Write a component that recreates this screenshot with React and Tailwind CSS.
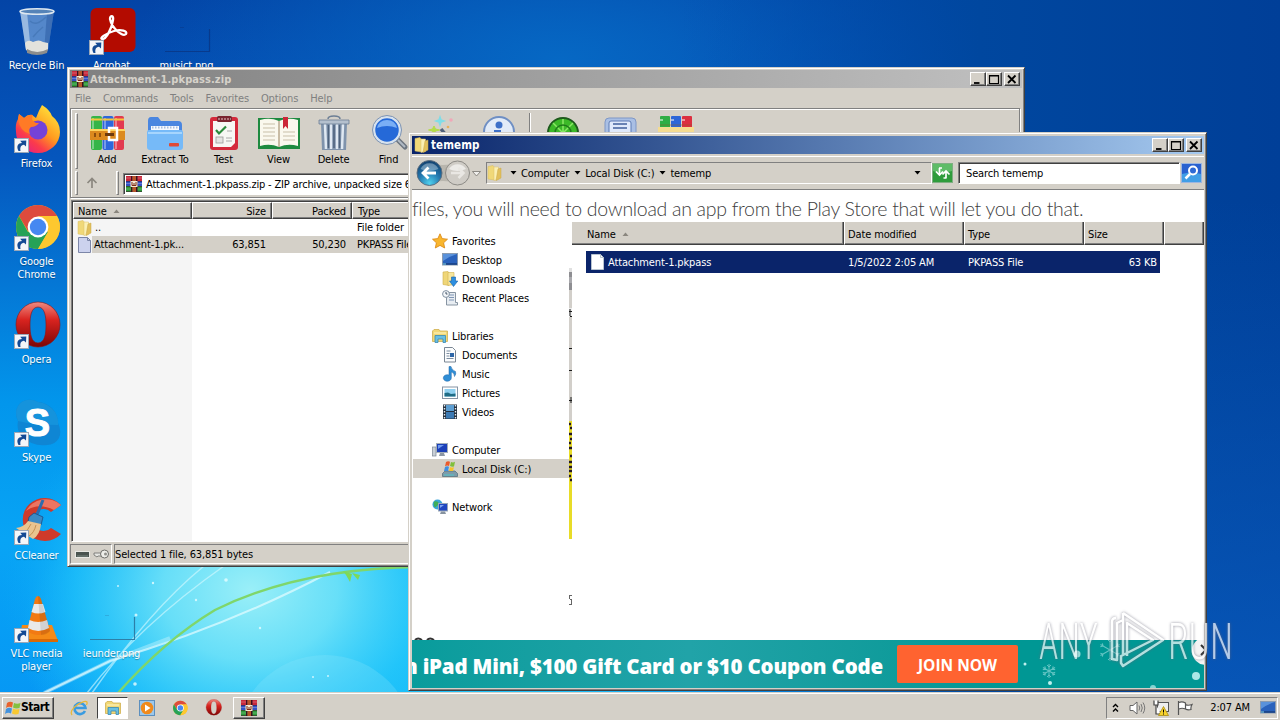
import clsx from "clsx";

const raised = "border border-t-white border-l-white border-r-[#404040] border-b-[#404040] shadow-[inset_-1px_-1px_0_#808080]";
const sunken = "border border-t-[#808080] border-l-[#808080] border-r-white border-b-white";

/* ---------- wallpaper ---------- */

const Wallpaper = () => (
    <svg className="absolute inset-0" width="1280" height="720" viewBox="0 0 1280 720">
        <defs>
            <linearGradient id="sky" x1="0" y1="0" x2="0" y2="1">
                <stop offset="0" stopColor="#0344a6" />
                <stop offset="0.22" stopColor="#0556bd" />
                <stop offset="0.4" stopColor="#0478d6" />
                <stop offset="0.56" stopColor="#0296ec" />
                <stop offset="0.75" stopColor="#08a4f5" />
                <stop offset="1" stopColor="#0696f4" />
            </linearGradient>
            <radialGradient id="glow" gradientUnits="userSpaceOnUse" cx="0" cy="0" r="1" gradientTransform="translate(250 590) scale(250 200)">
                <stop offset="0" stopColor="#9aeff8" />
                <stop offset="0.35" stopColor="#6fe2f8" stopOpacity="0.9" />
                <stop offset="0.7" stopColor="#22c4fa" stopOpacity="0.65" />
                <stop offset="1" stopColor="#08a8f6" stopOpacity="0" />
            </radialGradient>
            <radialGradient id="cyan" cx="0.5" cy="0.5" r="0.5">
                <stop offset="0" stopColor="#22c8fa" />
                <stop offset="0.6" stopColor="#22c8fa" stopOpacity="0.8" />
                <stop offset="1" stopColor="#22c8fa" stopOpacity="0" />
            </radialGradient>
            <radialGradient id="top" cx="0.5" cy="0.5" r="0.5">
                <stop offset="0" stopColor="#0668c4" />
                <stop offset="1" stopColor="#0668c4" stopOpacity="0" />
            </radialGradient>
            <linearGradient id="right" x1="0" y1="0" x2="1" y2="0">
                <stop offset="0" stopColor="#0050b0" stopOpacity="0" />
                <stop offset="0.5" stopColor="#00479f" />
                <stop offset="1" stopColor="#003f98" />
            </linearGradient>
            <linearGradient id="corner" x1="0" y1="0" x2="0" y2="1">
                <stop offset="0" stopColor="#0a5fc4" stopOpacity="0" />
                <stop offset="1" stopColor="#0a5fc4" stopOpacity="0.7" />
            </linearGradient>
        </defs>
        <rect width="1280" height="720" fill="url(#sky)" />
        <ellipse cx="560" cy="60" rx="430" ry="190" fill="url(#top)" />
        <rect x="680" width="600" height="720" fill="url(#right)" />
        <rect x="1180" y="200" width="100" height="500" fill="url(#corner)" />
        <ellipse cx="380" cy="640" rx="360" ry="200" fill="url(#cyan)" />
        <rect x="0" y="380" width="520" height="340" fill="url(#glow)" />
        <circle cx="325" cy="745" r="90" fill="#8fe9fc" opacity="0.25" />
        <path d="M44 693 L110 661 Q230 625 330 572" stroke="#e6fcff" strokeWidth="2" fill="none" opacity="0.7" />
        <path d="M44 693 L110 661 L170 638" stroke="#e6fcff" strokeWidth="4" fill="none" opacity="0.35" />
        <path d="M87 693 Q140 625 224 566 M92 693 Q150 610 204 566" stroke="#d8faff" strokeWidth="1.5" fill="none" opacity="0.6" />
        <path d="M118 693 Q165 640 215 610 Q300 568 420 567" stroke="#7fd66a" strokeWidth="2.4" fill="none" />
        <path d="M343 571 l9 3 -2 8 -4 -7z M352 573 l8 2 -2 5z" fill="#7ed957" />
        <g fill="#e8fdff" opacity="0.8">
            <circle cx="226" cy="580" r="1.8" /><circle cx="153" cy="583" r="1.2" /><circle cx="118" cy="586" r="1" />
            <circle cx="196" cy="600" r="1.2" /><circle cx="136" cy="615" r="1.5" /><circle cx="260" cy="628" r="1.2" />
            <circle cx="135" cy="684" r="1.8" /><circle cx="313" cy="677" r="1" /><circle cx="328" cy="676" r="1" />
        </g>
    </svg>
);

/* ---------- desktop icons ---------- */

const Shortcut = () => (
    <svg className="absolute bottom-0 left-px" width="15" height="15" viewBox="0 0 15 15">
        <rect x="0.5" y="0.5" width="14" height="14" fill="#f4f6f9" stroke="#9aa7b8" />
        <path d="M4.5 13 C2 8 4 5 8 5 L6.2 2.8 12.3 2.4 12 8.6 10 6.8 C6.5 7.5 6 9.5 6.5 13Z" fill="#144a94" />
    </svg>
);

const BinIcon = () => (
    <svg width="48" height="48" viewBox="0 0 48 48">
        <path d="M7 4 L13 43 Q24 49 35 43 L41 4Z" fill="#7faadb" opacity="0.65" />
        <path d="M7 4 L13 43 L18 45 L14 5Z" fill="#dcebf8" opacity="0.5" />
        <path d="M41 4 L35 43 L31 45 L34 5Z" fill="#27589f" opacity="0.5" />
        <path d="M12 36 Q15 32 20 35 Q26 32 30 35 L35 36 L35 43 Q24 49 13 43Z" fill="#e2e2dc" />
        <path d="M14 42 Q24 48 35 42 L34 46 Q24 50 14 46Z" fill="#8c8d8c" />
        <ellipse cx="24" cy="4.5" rx="17" ry="2.8" fill="#5583b8" stroke="#dde7f0" strokeWidth="1.6" />
        <path d="M17 14 q6 6 16 -4 M20 30 q5 -6 10 -10" stroke="#3566a3" fill="none" strokeWidth="1.5" opacity="0.4" />
    </svg>
);

const AcrobatIcon = () => (
    <svg width="48" height="48" viewBox="0 0 48 48">
        <rect x="2.500" y="1" width="45" height="44" rx="6" fill="#b30b00" />
        <path d="M14 32 C11 31 19 26 26 24 C33 22 40 24 38 27 C35 30 24 22 22 12 C22 8 26 8 25 13 C24 21 18 33 14 32Z" fill="none" stroke="#fff" strokeWidth="2.3" strokeLinejoin="round" />
    </svg>
);

const FirefoxIcon = () => (
    <svg width="48" height="48" viewBox="0 0 48 48">
        <defs>
            <linearGradient id="ff" x1="0.85" y1="0.1" x2="0.2" y2="0.95">
                <stop offset="0" stopColor="#ffe13a" /><stop offset="0.45" stopColor="#ff9a1f" />
                <stop offset="0.75" stopColor="#fb3b4b" /><stop offset="1" stopColor="#e6227d" />
            </linearGradient>
        </defs>
        <path d="M29 0 Q37 5 39 11 Q47 17 47 27 A22 21 0 0 1 3 27 Q2 19 5 14 L6 9 L11 13 Q15 9 19 10 L23 13 Q26 5 29 0Z" fill="url(#ff)" />
        <circle cx="25" cy="25" r="9.5" fill="#7542d8" />
        <path d="M6 9 L11 13 Q16 9 20 10 Q17 15 23 18 L26 18 Q23 22 18 22 Q15 24 17 29 Q7 27 5 14Z" fill="#ff7a26" />
    </svg>
);

const ChromeIcon = ({ size = 48 }) => (
    <svg width={size} height={size} viewBox="0 0 48 48">
        <circle cx="25" cy="24" r="22" fill="#fbc02f" />
        <path d="M25 24 L44 13 A22 22 0 0 0 6 13 L15 28Z" fill="#dd4b3d" />
        <path d="M6 13 A22 22 0 0 0 25 46 L35 29 L25 24 L15 29Z" fill="#26a257" />
        <path d="M25 13 H44 A22 22 0 0 1 25 46 L35 29Z" fill="#fdc82f" />
        <circle cx="25" cy="24" r="10.4" fill="#fff" />
        <circle cx="25" cy="24" r="8.2" fill="#4688f1" />
    </svg>
);

const OperaIcon = ({ size = 48 }) => (
    <svg width={size} height={size} viewBox="0 0 48 48">
        <defs>
            <linearGradient id="op" x1="0" y1="0" x2="0" y2="1">
                <stop offset="0" stopColor="#f08a80" /><stop offset="0.4" stopColor="#d8231f" /><stop offset="1" stopColor="#7c0606" />
            </linearGradient>
        </defs>
        <path fillRule="evenodd" d="M25 1 A22 22.5 0 0 1 25 46 A22 22.5 0 0 1 25 1Z M25 6 C18 6 17 16 17 24 C17 32 18 42 25 42 C32 42 33 32 33 24 C33 16 32 6 25 6Z" fill="url(#op)" stroke="#8e1010" strokeWidth="0.6" />
    </svg>
);

const SkypeIcon = () => (
    <svg width="48" height="48" viewBox="0 0 48 48">
        <path d="M14 1 Q20 0 25 3 A21 21 0 0 1 45 24 Q49 32 46 39 Q42 46 34 46 Q20 48 10 38 Q3 32 5 22 Q1 14 5 7 Q8 2 14 1Z" fill="#0f86d4" />
        <path d="M14 1 Q20 0 25 3 Q35 4 42 13 Q46 20 45 26 Q20 26 5 22 Q1 14 5 7 Q8 2 14 1Z" fill="#1593dc" />
        <text x="24.500" y="37" textAnchor="middle" className="font-['Liberation_Sans',sans-serif] text-[38px] font-bold tracking-normal" fill="#fff" stroke="#fff" strokeWidth="1">S</text>
    </svg>
);

const CCleanerIcon = () => (
    <svg width="48" height="48" viewBox="0 0 48 48">
        <path d="M48 8 A22 21.5 0 1 0 48 37 L38 31 A10.500 11 0 1 1 38 15Z" fill="#cf3a2a" />
        <path d="M48 8 A22 21 0 0 0 13 14 Q25 5 41 13Z" fill="#ec7562" />
        <path d="M30 3 L23 20" stroke="#2d6cae" strokeWidth="3" />
        <path d="M16 20 L21 16 L30 20 L28 28 L15 25Z" fill="#3b8ac4" stroke="#1b4c86" strokeWidth="0.8" />
        <path d="M15 24 L28 27 Q27 38 20 42 L3 31 Q11 30 15 24Z" fill="#eac48f" />
        <path d="M18 27 Q15 34 10 36 M23 28 Q21 36 16 39" stroke="#c49255" fill="none" />
    </svg>
);

const VlcIcon = () => (
    <svg width="48" height="48" viewBox="0 0 48 48">
        <path d="M9 30 H39 L45 46 H6Z" fill="#f58a16" />
        <path d="M6 44 H45 V47 H6Z" fill="#d96a06" />
        <path d="M25 1 Q27 1 28 4 L37 36 Q25 44 14 36 L22 4 Q23 1 25 1Z" fill="#f27a13" />
        <path d="M21 9 H30 L32.500 17 Q25 20 18.500 17Z M16.500 25 Q25 29 34 25 L36 33 Q25 39 15 33Z" fill="#e9e9e9" />
        <path d="M25 1 Q27 1 28 4 L37 36 Q34 40 28 40Z" fill="#000" opacity="0.1" />
    </svg>
);

// image thumbnail that only shows its own shadow
const GhostThumb = ({ dark }) => (
    <svg width="48" height="48" viewBox="0 0 48 48">
        <path d="M2 44.500 H46.500 V22" fill="none" stroke={dark ? "#083a8c" : "#2c7fa8"} strokeWidth="1.2" />
        <path d="M17 20.500 h4" stroke={dark ? "#083a8c" : "#2c9dd0"} opacity="0.6" />
    </svg>
);

const desktopItems = [
    { label: "Recycle Bin", icon: <BinIcon />, cell: "col-start-1 row-start-1" },
    { label: "Firefox", icon: <FirefoxIcon />, cell: "col-start-1 row-start-2", shortcut: true },
    { label: "Google Chrome", icon: <ChromeIcon />, cell: "col-start-1 row-start-3", shortcut: true },
    { label: "Opera", icon: <OperaIcon />, cell: "col-start-1 row-start-4", shortcut: true },
    { label: "Skype", icon: <SkypeIcon />, cell: "col-start-1 row-start-5", shortcut: true },
    { label: "CCleaner", icon: <CCleanerIcon />, cell: "col-start-1 row-start-6", shortcut: true },
    { label: "VLC media player", icon: <VlcIcon />, cell: "col-start-1 row-start-7", shortcut: true },
    { label: "Acrobat", icon: <AcrobatIcon />, cell: "col-start-2 row-start-1", shortcut: true },
    { label: "ieunder.png", icon: <GhostThumb />, cell: "col-start-2 row-start-7" },
    { label: "musict.png", icon: <GhostThumb dark />, cell: "col-start-3 row-start-1" },
];

const DesktopIcons = () => (
    <div className="absolute -left-px top-[7px] grid grid-cols-[75px_75px_75px] grid-rows-[repeat(7,98px)]">
        {desktopItems.map((item) => (
            <div key={item.label} className={clsx("flex flex-col items-center", item.cell)}>
                <div className="relative h-12 w-12">
                    {item.icon}
                    {item.shortcut && <Shortcut />}
                </div>
                <div className="mt-1 w-[62px] text-center text-white [text-shadow:0_1px_1px_#0005]">{item.label}</div>
            </div>
        ))}
    </div>
);

/* ---------- small icons ---------- */

const RarIcon = ({ size = 16 }) => (
    <svg width={size} height={size} viewBox="0 0 16 16" className="shrink-0">
        <rect width="16" height="16" fill="#3c1226" />
        <rect x="0" y="0" width="16" height="5" fill="#c8283c" />
        <rect x="0" y="5.500" width="16" height="4.500" fill="#3350c4" />
        <rect x="0" y="10.500" width="16" height="5" fill="#2d9a3a" />
        <path d="M0 2 h16 M0 7.500 h16 M0 13 h16" stroke="#fff" strokeOpacity="0.25" />
        <rect x="5" y="0" width="1.500" height="16" fill="#3a1020" /><rect x="10" y="0" width="1.500" height="16" fill="#3a1020" />
        <rect x="6.500" y="0" width="3.500" height="16" fill="#b8562a" />
        <rect x="4.500" y="5" width="7" height="6" fill="#f4e8d4" />
        <path d="M6 6 v3.500 h4 V6 M8 7 v2" stroke="#7c2a14" fill="none" />
    </svg>
);

const FolderIcon = ({ size = 16 }) => (
    <svg width={size} height={size} viewBox="0 0 16 16" className="shrink-0">
        <path d="M1 1.500 L6 0.500 L7.500 2.500 V15 L1 14Z" fill="#f0d878" stroke="#d8bc60" strokeWidth="0.500" />
        <path d="M7 2 H11.500 V14.500 L7 15.500Z" fill="#fbf0b4" stroke="#dcc068" strokeWidth="0.500" />
        <path d="M11 4 L14 3 V13 L9 15.500Z" fill="#e2c05c" stroke="#cba848" strokeWidth="0.500" />
    </svg>
);

const FileIcon = ({ fill = "#fff", stroke = "#b8c4d0" }) => (
    <svg width="16" height="16" viewBox="0 0 16 16" className="shrink-0">
        <path d="M1.500 0.500 H10.500 L13.500 3.500 V15.500 H1.500Z" fill={fill} stroke={stroke} />
        <path d="M10.500 0.500 V3.500 H13.500" fill="none" stroke={stroke} />
    </svg>
);

const navIcons = {
    star: <path d="M8 0.800 L10.200 5.600 L15.500 6.200 L11.600 9.800 L12.700 15 L8 12.400 L3.300 15 L4.400 9.800 L0.500 6.200 L5.800 5.600Z" fill="#f9b62e" stroke="#d98410" strokeWidth="0.8" />,
    desktop: <g><rect x="0.500" y="1.500" width="15" height="11.500" fill="#2a62bc" stroke="#8a9bb0" /><path d="M1 2 H15 Q8 4 1 9Z" fill="#6fa6e8" opacity="0.700" /><path d="M1 12 H15" stroke="#173f80" strokeWidth="1.500" /><path d="M1 12 h3" stroke="#8de" /></g>,
    downloads: <g><path d="M1 1 L6 0.500 L7 2 V14.500 L1 13.500Z" fill="#efd678" stroke="#cfae4c" strokeWidth="0.6" /><path d="M6 1.500 H12 V13.500 L6 14.500Z" fill="#f7e69c" stroke="#d2b250" strokeWidth="0.6" /><path d="M9.500 6 h4 v4 h2.300 L11.500 15.500 7.500 10 h2z" fill="#2e8fe0" stroke="#1762a8" strokeWidth="0.6" /></g>,
    recent: <g><path d="M5 2.500 H13.500 V12.500 H15.500 V15 H4.500 V9Z" fill="#e8edf2" stroke="#8794a2" /><path d="M7 5 h5 M7 7.500 h5 M7 10 h5" stroke="#7f95b5" /><circle cx="4" cy="4" r="3.400" fill="#f4f7fa" stroke="#8090a0" /><path d="M4 2 v2 h1.500" stroke="#456" fill="none" /></g>,
    libraries: <g><path d="M0.500 3 L2 1.500 H7 L8 3 H15.500 V13.500 H0.500Z" fill="#f2d875" stroke="#d0b050" strokeWidth="0.8" /><path d="M2 5 h12" stroke="#fff6c8" /><path d="M3 14.500 V7.500 H13.500 V14.500 H11 V11 H6 V14.500Z" fill="#69bfe2" stroke="#3889b4" strokeWidth="0.8" /></g>,
    documents: <g><path d="M2.500 0.500 H10.500 L13.500 3.500 V15 H2.500Z" fill="#fbfcfd" stroke="#7b8794" /><path d="M4.500 4 h4 M4.500 6.500 h3 M4.500 9 h3 M4.500 11.500 h7" stroke="#7d8ea2" /><rect x="8" y="6" width="4" height="4" fill="#2e66a8" /></g>,
    music: <path d="M7 0.500 L9 0.500 Q9.500 4 13.500 5.500 Q14.500 8 12.500 10.500 Q12.500 6.500 9.300 6 V12 A4 3.300 0 1 1 7 9Z" fill="#2f8ed6" stroke="#1a63a6" strokeWidth="0.500" />,
    pictures: <g><rect x="0.500" y="2" width="15" height="11.500" fill="#fff" stroke="#8694a4" /><rect x="2.500" y="4" width="11" height="7.500" fill="#8fd0f0" /><path d="M2.500 11.500 V8 L6 7.500 L9 9 L13.500 8.500 V11.500Z" fill="#1f6c86" /></g>,
    videos: <g><rect x="1" y="0.500" width="14" height="14.500" fill="#24303e" /><rect x="4" y="1" width="8" height="6" fill="#5d9ed2" /><rect x="4" y="8" width="8" height="6.500" fill="#3c7ab4" /><path d="M2.500 1 V15 M13.500 1 V15" stroke="#e6edf4" strokeWidth="1.4" strokeDasharray="1.500 1.500" /></g>,
    computer: <g><rect x="0.500" y="5" width="3.500" height="9" fill="#c9cfd6" stroke="#7d8894" strokeWidth="0.700" /><rect x="4.500" y="1.500" width="11" height="9" fill="#1b3fb8" stroke="#a3adb8" /><path d="M6 3 H12 L6 7Z" fill="#6f9af0" /><path d="M8 11 h4 l1 3 h-6z" fill="#8b96a3" /></g>,
    disk: <g><path d="M3 10 H13 L15.500 12.500 V15.500 H0.500 V12.500Z" fill="#7d9baa" stroke="#4d6a78" strokeWidth="0.700" /><path d="M2 14 h10" stroke="#52c7c9" /><path d="M4 1 Q6 -0.500 8 0.800 L7 5 Q5 4 3 5.500Z" fill="#ea5a2b" /><path d="M9 1 Q11 2 13 0.800 L12 5.500 Q10 6 8 5Z" fill="#7fbf3a" /><path d="M3 6 Q5 4.500 7 5.800 L6 10 H2Z" fill="#3f8fe0" /><path d="M8 6 Q10 7 12 6 L11 10 H7Z" fill="#f6c32b" /></g>,
    network: <g><circle cx="5.500" cy="5.500" r="5" fill="#3aa5d8" /><path d="M2 2.500 Q6 1.500 7 4.500 Q5 7.500 3 8.500 Q1 6.500 2 2.500Z" fill="#3fae59" /><rect x="6.500" y="4.500" width="9" height="7.500" fill="#1f46c0" stroke="#9aa7b5" /><path d="M8 6 h4 l-4 3z" fill="#7ea4f2" /><path d="M9 12.500 h4 l1 2.500 h-6z" fill="#8793a0" /></g>,
};

const NavIcon = ({ name }) => <svg width="16" height="16" viewBox="0 0 16 16" className="shrink-0">{navIcons[name]}</svg>;

const Caret = ({ className = "" }) => (
    <svg className={className} width="7" height="4" viewBox="0 0 7 4"><path d="M0.500 0 H6.500 L3.500 3.500Z" fill="#000" /></svg>
);

const SortArrow = () => (
    <svg className="ml-1.5 mb-0.5" width="7" height="4" viewBox="0 0 7 4"><path d="M0.500 4 H6.500 L3.500 0.500Z" fill="#8a867e" /></svg>
);

/* ---------- window chrome ---------- */

const CaptionButtons = () => (
    <div className="flex">
        {["M3 10 H8.500", "M2.500 3 H11 M2.500 2.500 H11.500 V10.500 H2.500Z", "M3 2.500 L10.500 10 M10.500 2.500 L3 10"].map((d, i) => (
            <div key={d} className={clsx("flex h-3.5 w-4 items-center justify-center bg-[#d4d0c8]", raised, i === 2 && "ml-0.5")}>
                <svg width="14" height="13" viewBox="0 0 14 13" className="shrink-0"><path d={d} fill="none" stroke="#000" strokeWidth={i === 1 ? 1.2 : 1.8} /></svg>
            </div>
        ))}
    </div>
);

/* ---------- WinRAR toolbar ---------- */

const rarTools = [
    {
        label: "Add", width: "w-[54px]", icon: (
            <g>
                <rect x="2" y="1" width="11" height="34" rx="2" fill="#35b548" /><rect x="13.500" y="1" width="11" height="34" rx="2" fill="#2d67dc" /><rect x="25" y="1" width="10" height="34" rx="2" fill="#e23a50" />
                <path d="M4 3 V34 M16 3 V34 M27 3 V34" stroke="#fff" strokeWidth="2" opacity="0.35" />
                <path d="M2 4.500 h11 M13.500 4.500 h11 M25 4.500 h10" stroke="#f6c63c" strokeWidth="2" />
                <rect x="1" y="14" width="35" height="11" fill="#dc8a1e" /><path d="M1 15 H36" stroke="#ffd45c" strokeWidth="2" />
                <rect x="20" y="13" width="8" height="12" fill="none" stroke="#fff" strokeWidth="2.500" /><path d="M16 19.500 h9" stroke="#6e3b0d" strokeWidth="3" />
                <path d="M6 18 v4 M11 18 v4" stroke="#8f500e" strokeWidth="2" />
            </g>),
    },
    {
        label: "Extract To", width: "w-[62px]", icon: (
            <g>
                <path d="M1 6 Q1 2 4 2 H11 L14 6 H31 Q35 6 35 10 V28 H1Z" fill="#4a86e0" />
                <path d="M4 11 H32 V20 H4Z" fill="#f6f9ff" /><path d="M5 12.500 H32" stroke="#a8bddc" strokeWidth="2" strokeDasharray="1.500 1.500" />
                <path d="M0 17 Q0 15 2 15 H34 Q36 15 36 17 V32 Q36 35 33 35 H3 Q0 35 0 32Z" fill="#76baf8" />
                <path d="M1 18 H35" stroke="#b7deff" strokeWidth="1.500" /><rect x="22" y="28" width="10" height="3.500" rx="1" fill="#e04a34" />
            </g>),
    },
    {
        label: "Test", width: "w-[55px]", icon: (
            <g>
                <rect x="4" y="2" width="28" height="33" rx="3" fill="#d42a3c" /><path d="M7 6 H29 V28 L25 32 H7Z" fill="#f7f7f4" />
                <rect x="11" y="1" width="15" height="6" rx="1.500" fill="#7a2530" /><path d="M12 4 h13" stroke="#e6c9c9" strokeDasharray="2 1" />
                <path d="M10 15 l3 3.500 7 -7" stroke="#2b8a3c" strokeWidth="2.200" fill="none" /><rect x="10" y="22" width="7" height="6" fill="#e4e4e2" stroke="#9b9b9b" strokeWidth="0.800" />
                <path d="M21 16 h5 M20 23 h6 M20 26 h6" stroke="#aaa" />
            </g>),
    },
    {
        label: "View", width: "w-[55px]", icon: (
            <g>
                <path d="M-3 3 H39 V34 H-3Z" fill="#1e8a40" /><path d="M-1 5 Q9 2 18 6 Q27 2 37 5 V31 Q27 28 18 32 Q9 28 -1 31Z" fill="#faf8ee" />
                <path d="M18 6 V32" stroke="#b9a98c" strokeWidth="1.500" /><path d="M2 9 h12 M2 13 h12 M2 17 h12 M2 21 h12 M2 25 h12 M22 17 h12 M22 21 h12 M22 25 h12" stroke="#c8bfa9" />
                <path d="M22 2 h5 v12 l-2.500 -3 -2.500 3z" fill="#cc2638" />
            </g>),
    },
    {
        label: "Delete", width: "w-[55px]", icon: (
            <g>
                <path d="M5 8 H31 L30 35 H6Z" fill="#7f93ac" /><path d="M9 9 L10 34 M15 9 V34 M21 9 V34 M27 9 L26 34" stroke="#dfe8f2" strokeWidth="2.500" />
                <path d="M12.500 10 V33 M18 10 V33 M23.500 10 V33" stroke="#4e627c" strokeWidth="1.500" />
                <path d="M3 5 H33 V9 H3Z" fill="#b4c0ce" stroke="#6d7f95" strokeWidth="0.800" /><path d="M12 4 Q12 1 18 1 Q24 1 24 4" fill="none" stroke="#6d7f95" strokeWidth="1.500" />
            </g>),
    },
    {
        label: "Find", width: "w-[55px]", icon: (
            <g>
                <path d="M27 25 L34 32" stroke="#6d7680" strokeWidth="5" strokeLinecap="round" /><path d="M27 25 L34 32" stroke="#b0bac4" strokeWidth="2" />
                <circle cx="16" cy="15" r="13" fill="#2569d8" stroke="#d7e2ee" strokeWidth="2.500" /><circle cx="16" cy="15" r="14.500" fill="none" stroke="#7c93b4" />
                <path d="M6 13 Q8 5 16 5 Q24 5 26 13 Q16 9 6 13Z" fill="#79aef5" />
            </g>),
    },
    {
        label: "Wizard", width: "w-[55px]", icon: (
            <g>
                <path d="M14 2 l1 3 3 1 -3 1 -1 3 -1 -3 -3 -1 3 -1z" fill="#7fdde8" stroke="#7fdde8" strokeWidth="1.500" /><circle cx="25" cy="5" r="1.800" fill="#f0a8b8" />
                <path d="M8 11 l1.500 3 4 1 -4 1 -1.500 3 -1.500 -3 -4 -1 4 -1z" fill="#b5dc4a" stroke="#b5dc4a" /><path d="M15 14 L30 32" stroke="#50607a" strokeWidth="3.500" /><circle cx="22" cy="12" r="1.300" fill="#e8b05a" />
            </g>),
    },
    {
        label: "Info", width: "w-[56px]", icon: (
            <g><circle cx="18" cy="17" r="15" fill="#e2ebf8" stroke="#6f8fc4" strokeWidth="2" /><circle cx="18" cy="10" r="3.500" fill="#3e70c8" /><path d="M13 15 h7 v12 h3 v2 h-10z" fill="#3e70c8" /></g>),
    },
    { separator: true },
    {
        label: "VirusScan", width: "w-[55px]", icon: (
            <g><circle cx="17" cy="18" r="15" fill="#3cb928" stroke="#1d5a1c" strokeWidth="2" /><path d="M17 4 V32 M7 8 L27 28 M27 8 L7 28" stroke="#8ae866" strokeWidth="1.500" /><circle cx="17" cy="18" r="8" fill="none" stroke="#1f7a1a" strokeWidth="1.500" /></g>),
    },
    {
        label: "Comment", width: "w-[57px]", icon: (
            <g><path d="M3 7 Q3 3 7 3 H30 Q34 3 34 7 V30 H3Z" fill="#a9bfe4" stroke="#7f97c6" /><rect x="7" y="6" width="22" height="20" rx="2" fill="#dfe9fa" stroke="#5c7ab4" /><path d="M11 9 h14 M11 13 h14" stroke="#42609c" strokeWidth="1.500" /></g>),
    },
    {
        label: "SFX", width: "w-[55px]", icon: (
            <g><rect x="2" y="1" width="10" height="30" rx="1" fill="#2fae45" /><rect x="13" y="1" width="10" height="30" rx="1" fill="#2d66d8" /><rect x="24" y="1" width="10" height="30" rx="1" fill="#dc2f40" /><path d="M2 5 h32" stroke="#fff" strokeWidth="2" strokeDasharray="3 8" opacity="0.500" /><path d="M2 10 h32" stroke="#8a5a20" opacity="0.500" /><rect x="0" y="12" width="36" height="8" fill="#f5dc90" /></g>),
    },
];

const Grip = ({ className }) => <div className={clsx("w-[3px] border border-t-white border-l-white border-r-[#808080] border-b-[#808080]", className)} />;

const ArchiveWindow = () => (
    <div className="absolute left-[67px] top-[67px] flex h-[500px] w-[958px] flex-col border border-t-[#d4d0c8] border-l-[#d4d0c8] border-r-[#404040] border-b-[#404040] bg-[#d4d0c8] p-[2px] shadow-[inset_1px_1px_0_#fff,inset_-1px_-1px_0_#808080]">
        <div className="flex h-[18px] shrink-0 items-center bg-linear-to-r from-[#808080] to-[#c0c0c0] px-0.5">
            <RarIcon />
            <span className="ml-0.5 flex-1 text-[11px] font-bold tracking-[0.08px] text-[#d6d2ca]">Attachment-1.pkpass.zip</span>
            <CaptionButtons />
        </div>
        <div className="flex h-5 shrink-0 items-center gap-3 pl-[5px] text-[#808080]">
            {["File", "Commands", "Tools", "Favorites", "Options", "Help"].map((m) => <span key={m}>{m}</span>)}
        </div>
        <div className="mr-0.5 flex h-[90px] shrink-0 flex-col border border-[#808080] shadow-[inset_1px_1px_0_#fff,1px_1px_0_#fff]">
            <div className="flex h-[60px] pl-1">
                <Grip className="mt-1 h-14 mr-0.5" />
                {rarTools.map((tool) => tool.separator
                    ? <div key="sep" className="mr-[5px] ml-0.5 mt-1 h-14 w-0.5 border-l border-l-[#808080] border-r border-r-white" />
                    : <div key={tool.label} className={clsx("flex shrink-0 flex-col items-center pt-1.5", tool.width)}>
                        <svg width="36" height="36" viewBox="0 0 36 36" className="shrink-0 overflow-visible">{tool.icon}</svg>
                        <span className="mt-0.5 whitespace-nowrap">{tool.label}</span>
                    </div>)}
            </div>
            <div className="flex h-[28px] items-center pl-1">
                <Grip className="h-6" />
                <svg className="ml-2" width="12" height="12" viewBox="0 0 12 12"><path d="M6 11 V1.500 M1.500 6 L6 1.500 L10.500 6" stroke="#8b877f" strokeWidth="1.700" fill="none" /></svg>
                <Grip className="ml-[18px] h-6" />
                <div className={clsx("ml-1 mt-px flex h-[22px] flex-1 items-center bg-white pl-0.5 shadow-[inset_1px_1px_0_#404040]", sunken)}>
                    <RarIcon />
                    <span className="ml-1 whitespace-pre pt-0.5 tracking-[-0.17px]">Attachment-1.pkpass.zip - ZIP archive, unpacked size 63,851 bytes</span>
                </div>
            </div>
        </div>
        <div className="mt-0.5 ml-px flex min-h-0 flex-1 flex-col border border-t-[#808080] border-l-[#808080] border-r-white border-b-white bg-white bg-[linear-gradient(to_right,#f5f5f5_120px,#fff_120px)] pt-px shadow-[inset_1px_1px_0_#404040]">
            <div className="ml-px grid h-[17px] shrink-0 grid-cols-[119px_80px_80px_1fr] bg-[#d4d0c8]">
                <div className={clsx("flex items-center pl-[4px] pt-0.5", raised)}>Name<SortArrow /></div>
                <div className={clsx("flex items-center justify-end pr-[5px] pt-0.5", raised)}>Size</div>
                <div className={clsx("flex items-center justify-end pr-[5px] pt-0.5", raised)}>Packed</div>
                <div className={clsx("flex items-center pl-[5px] pt-0.5", raised)}>Type</div>
            </div>
            <div className="ml-px grid h-[17px] shrink-0 grid-cols-[119px_80px_80px_1fr] items-center">
                <div className="flex items-center pl-1"><FolderIcon /><span className="ml-0.5">..</span></div>
                <div />
                <div />
                <div className="pl-[5px]">File folder</div>
            </div>
            <div className="ml-px grid h-[17px] shrink-0 grid-cols-[119px_80px_80px_1fr] items-center bg-[linear-gradient(to_right,#f5f5f5_19px,#d4d0c8_19px)]">
                <div className="flex items-center pl-1"><FileIcon fill="#ccd2ee" stroke="#7c86a8" /><span className="ml-px">Attachment-1.pk...</span></div>
                <div className="pr-[6px] text-right">63,851</div>
                <div className="pr-[6px] text-right">50,230</div>
                <div className="pl-[5px]">PKPASS File</div>
            </div>
        </div>
        <div className="mt-0.5 flex h-5 shrink-0 gap-0.5">
            <div className={clsx("flex w-[42px] items-center gap-[3px] pl-1", sunken)}>
                <svg width="15" height="7" viewBox="0 0 15 7"><rect x="0.500" y="0.500" width="14" height="6" fill="#4a5450" stroke="#e8e8e4" /><path d="M2 5 h11" stroke="#7c8a84" /></svg>
                <svg width="17" height="10" viewBox="0 0 17 10"><path d="M1 4 H9 V7 H5 L4 8 L1 6Z" fill="#e5e5e1" stroke="#6d6d69" strokeWidth="0.800" /><circle cx="11.500" cy="5" r="4" fill="#eeeeea" stroke="#6d6d69" /><circle cx="12.500" cy="5" r="1.500" fill="#8f8f8b" /></svg>
            </div>
            <div className={clsx("flex flex-1 items-center pt-px", sunken)}>Selected 1 file, 63,851 bytes</div>
        </div>
    </div>
);

/* ---------- Explorer ---------- */

const nav = [
    { label: "Favorites", icon: "star", root: true },
    { label: "Desktop", icon: "desktop" },
    { label: "Downloads", icon: "downloads" },
    { label: "Recent Places", icon: "recent" },
    null,
    { label: "Libraries", icon: "libraries", root: true },
    { label: "Documents", icon: "documents" },
    { label: "Music", icon: "music" },
    { label: "Pictures", icon: "pictures" },
    { label: "Videos", icon: "videos" },
    null,
    { label: "Computer", icon: "computer", root: true },
    { label: "Local Disk (C:)", icon: "disk", active: true },
    null,
    { label: "Network", icon: "network", root: true },
];

// sliver of the page that is still showing between the two panes
const PageSliver = () => (
    <svg className="shrink-0" width="3" height="400" viewBox="0 0 3 400">
        <rect y="37" width="3" height="4" fill="#e0e0e0" />
        <rect y="41" width="3" height="18" fill="#8e8e92" />
        <rect y="46" width="3" height="6" fill="#a9a9ad" />
        <rect y="59" width="3" height="131" fill="#d2cfca" />
        <rect y="77" width="3" height="9" fill="#eee" />
        <path d="M1 78 V85 M0 80.500 H3 M1 85.500 H3 M0 117.500 H3 M0 139.500 H3 M0 169.500 H3 M2 166 V172" stroke="#1a1a1a" />
        <rect y="190" width="3" height="118" fill="#e8dc28" />
        <path d="M0 193 h2 M1 197 h2 M0 203 h3 M1 208 h2 M0 212 h2 M0 217 h3 M1 225 h2 M0 231 h3 M0 236 h3 M0 240 h3 M0 245 h2 M1 249 h2" stroke="#241826" strokeWidth="2.500" />
        <path d="M0 364.500 H3 M0.500 365 V368 M1 368.500 H3 M2.500 369 V373 M0 373.500 H3" stroke="#666" />
    </svg>
);

const Flake = ({ x, y, r }) => (
    <g transform={`translate(${x} ${y})`} stroke="#8fd8d8" strokeWidth="1" fill="none" opacity="0.7">
        {[0, 60, 120].map((a) => <path key={a} transform={`rotate(${a})`} d={`M0 ${-r} V${r} M-2 ${-r + 1} L0 ${-r + 3} L2 ${-r + 1} M-2 ${r - 1} L0 ${r - 3} L2 ${r - 1}`} />)}
    </g>
);

const Banner = () => (
    <div className="flex h-12 shrink-0 items-center overflow-hidden bg-linear-to-r from-[#089c9c] via-[#21a3a8] via-35% to-[#009794] to-75% tracking-normal [font-stretch:normal]">
        <div className="flex w-[471px] shrink-0 justify-end whitespace-pre pt-1 font-['Open_Sans',sans-serif] text-[20.500px] leading-7 font-extrabold tracking-[-0.19px] text-white">n iPad Mini, $100 Gift Card or $10 Coupon Code</div>
        <div className="ml-3.5 flex h-[38px] w-[121px] shrink-0 items-center justify-center rounded-[2px] bg-[#ff6330] pt-0.5 font-['Open_Sans',sans-serif] text-[15.500px] font-bold text-white">JOIN NOW</div>
        <svg width="186" height="48" viewBox="0 0 186 48" className="shrink-0">
            <Flake x={31} y={31} r={7} />
            <Flake x={92} y={10} r={11} />
            <g fill="#bdf0ee"><circle cx="7" cy="24" r="1.500" /><circle cx="32" cy="43" r="2" /><circle cx="59" cy="14" r="3.500" opacity="0.800" /><circle cx="178" cy="36" r="4" opacity="0.900" /><circle cx="135" cy="48" r="3" opacity="0.700" /></g>
            <circle cx="188" cy="11" r="14" fill="#f4f4f4" />
            <path d="M183 5 L190 12 M183 15 L190 8" stroke="#333" strokeWidth="2" />
        </svg>
    </div>
);

const ExplorerWindow = () => (
    <div className="absolute left-[408px] top-[132px] flex h-[559px] w-[799px] flex-col border border-t-[#d4d0c8] border-l-[#d4d0c8] border-r-[#404040] border-b-[#404040] bg-[#d4d0c8] pt-[3px] pr-0.5 pb-0.5 pl-[3px] shadow-[inset_1px_1px_0_#fff,inset_-1px_-1px_0_#808080]">
        <div className="flex h-[18px] shrink-0 items-center bg-linear-to-r from-[#0a246a] to-[#a6caf0] pl-0.5 pr-0.5">
            <FolderIcon />
            <span className="ml-px flex-1 text-[11.500px] font-bold tracking-[0.1px] text-white">tememp</span>
            <CaptionButtons />
        </div>
        <div className="mt-0.5 flex h-[34px] shrink-0 items-center border-b border-b-[#808080] border-t border-t-white pl-[3px] pr-0.5">
            <svg width="68" height="28" viewBox="0 0 68 28" className="shrink-0">
                <defs>
                    <radialGradient id="back" cx="0.5" cy="0.9" r="0.9"><stop offset="0" stopColor="#4fd0ee" /><stop offset="0.5" stopColor="#2377ae" /><stop offset="1" stopColor="#123f6c" /></radialGradient>
                </defs>
                <path d="M14 4 Q28 8 42 4 V24 Q28 20 14 24Z" fill="#b9b6ae" />
                <circle cx="14.500" cy="14" r="12.500" fill="url(#back)" stroke="#5c6e80" />
                <path d="M5.500 10 A10 10 0 0 1 23.500 10 Q14 14 5.500 10Z" fill="#fff" opacity="0.350" />
                <path d="M21 14 H8.500 M13.500 8.500 L8 14 L13.500 19.500" stroke="#fff" strokeWidth="2.800" fill="none" />
                <circle cx="42.500" cy="14" r="12" fill="#cfccc6" stroke="#8d8b86" />
                <path d="M34 10 A10 10 0 0 1 51 10 Q42 14 34 10Z" fill="#fff" opacity="0.600" />
                <path d="M36 14 H48 M43.500 9 L48.500 14 L43.500 19" stroke="#e9e7e3" strokeWidth="2.500" fill="none" />
                <path d="M57.500 12.500 H65.500 L61.500 17Z" fill="#f0efec" stroke="#77746d" strokeWidth="0.800" />
            </svg>
            <div className={clsx("ml-[3px] flex h-[22px] w-[446px] items-center", sunken)}>
                <FolderIcon />
                <Caret className="ml-[7px]" /><span className="ml-[4px]">Computer</span>
                <Caret className="ml-[5px]" /><span className="ml-1">Local Disk (C:)</span>
                <Caret className="ml-[5px]" /><span className="ml-1">tememp</span>
                <Caret className="ml-auto mr-[10px]" />
            </div>
            <svg width="21" height="20" viewBox="0 0 21 20" className="shrink-0">
                <rect x="0.500" y="0.500" width="20" height="19" fill="#2f9c3c" stroke="#7fae82" />
                <path d="M1 1 H20 V8 Q10 11 1 8Z" fill="#7fd283" opacity="0.600" />
                <path d="M7.500 5 V11 M4 8.500 L7.500 12 L11 8.500 M7 5 H10 M14 15.500 V10 M10.500 11.500 L14 8 L17.500 11.500 M14 15 H11.500" stroke="#fff" strokeWidth="1.700" fill="none" />
            </svg>
            <div className={clsx("ml-[5px] flex h-[22px] flex-1 items-center bg-white pl-[7px] shadow-[inset_1px_1px_0_#404040]", sunken)}>Search tememp</div>
            <svg width="21" height="20" viewBox="0 0 21 20" className="ml-px shrink-0">
                <rect x="0.500" y="0.500" width="20" height="19" fill="#2a62d0" stroke="#9cb6e0" />
                <path d="M1 11 Q10 8 20 11 V19 H1Z" fill="#4cb8f0" opacity="0.700" />
                <circle cx="12" cy="7.500" r="4" fill="#2f6ad4" stroke="#fff" strokeWidth="2" /><path d="M9 11 L4.500 15.500" stroke="#fff" strokeWidth="2.500" />
            </svg>
        </div>
        <div className="flex min-h-0 flex-1 flex-col bg-white">
            <div className="flex h-8 shrink-0 items-center whitespace-pre pt-1 font-[Lato,sans-serif] text-[19.500px] font-light tracking-[-0.295px] text-[#404040]">files, you will need to download an app from the Play Store that will let you do that.</div>
            <div className="flex min-h-0 flex-1">
                <div className="flex w-[157px] flex-col pt-[9px]">
                    {nav.map((item, i) => item
                        ? <div key={item.label} className={clsx("ml-px flex h-[19px] shrink-0 items-center gap-1", item.root ? "pl-[19px]" : "pl-[29px]", item.active && "bg-[#d4d0c8]")}>
                            <NavIcon name={item.icon} /><span className="pt-px">{item.label}</span>
                        </div>
                        : <div key={i} className="h-[19px] shrink-0" />)}
                    <svg className="mt-auto" width="30" height="3" viewBox="0 0 30 3"><path d="M3 3 Q6 0 10 3 M15 3 Q18 0 22 3" stroke="#333" strokeWidth="2" fill="none" /></svg>
                </div>
                <div className="pt-[9px]"><PageSliver /></div>
                <div className="flex flex-1 flex-col">
                    <div className="grid h-[23px] grid-cols-[272px_120px_120px_80px_1fr] bg-[#d4d0c8]">
                        {["Name", "Date modified", "Type", "Size", ""].map((c, i) => (
                            <div key={c} className={clsx("flex items-center border-b border-r border-b-[#404040] border-r-[#404040] pt-[3px] shadow-[inset_-1px_-1px_0_#808080]", i ? "border-l border-l-white pl-[3px]" : "pl-[15px]")}>{c}{i === 0 && <SortArrow />}</div>
                        ))}
                    </div>
                    <div className="ml-3.5 mt-1.5 grid h-[22px] w-[574px] grid-cols-[262px_120px_120px_1fr] items-center bg-[#0a246a] text-white">
                        <div className="flex items-center pl-1"><FileIcon /><span className="ml-0.5">Attachment-1.pkpass</span></div>
                        <div>1/5/2022 2:05 AM</div>
                        <div>PKPASS File</div>
                        <div className="pr-[3px] text-right">63 KB</div>
                    </div>
                </div>
            </div>
            <Banner />
        </div>
    </div>
);

/* ---------- taskbar ---------- */

const Taskbar = () => (
    <div className="absolute inset-x-0 bottom-0 flex h-7 items-center border-t border-t-[#d4d0c8] bg-[#d4d0c8] pl-0.5 pt-0.5 shadow-[inset_0_1px_0_#fff]">
        <div className={clsx("flex h-[22px] w-[52px] items-center pl-0.5 text-[12px] font-bold tracking-[-0.5px]", raised)}>
            <svg width="16" height="16" viewBox="0 0 16 16" className="shrink-0">
                <path d="M2 3 Q5 1 8 2.500 L7 7.500 Q4 6 1 8Z" fill="#e8622c" /><path d="M9 3 Q12 4.500 15.500 3 L14.500 8 Q11 9 8 7.500Z" fill="#84c040" />
                <path d="M1 9 Q4 7 7 8.500 L6 13.500 Q3 12 0 14Z" fill="#4292de" /><path d="M8 8.500 Q11 10 14.500 9 L13.500 14 Q10 15 7 13.500Z" fill="#f8c832" />
            </svg>
            Start
        </div>
        <div className="ml-[15px] flex w-7 items-center">
            <svg width="20" height="18" viewBox="0 0 20 18">
                <path d="M16 12 A5.500 5.500 0 1 1 16.500 9 H6" fill="none" stroke="#3a9be0" strokeWidth="2.600" />
                <path d="M3 16 Q0 12 8 6 Q16 1 18 3 Q18.500 4 17.500 6" fill="none" stroke="#e8b838" strokeWidth="1.300" />
            </svg>
        </div>
        <div className="flex h-[22px] w-[31px] items-center justify-center border border-t-[#404040] border-l-[#404040] border-r-white border-b-white bg-white"><NavIcon name="libraries" /></div>
        <svg className="ml-[11px]" width="16" height="16" viewBox="0 0 16 16">
            <rect x="0.500" y="0.500" width="15" height="15" fill="#9cc8ec" stroke="#5c8fbe" /><circle cx="8" cy="8" r="6.300" fill="#f08a1c" /><path d="M6 4.500 L11.500 8 L6 11.500Z" fill="#fff" />
        </svg>
        <div className="ml-[17px]"><ChromeIcon size={16} /></div>
        <div className="ml-[17px]"><OperaIcon size={17} /></div>
        <div className={clsx("ml-[11px] flex h-[22px] w-8 items-center justify-center", raised)}><RarIcon /></div>
        <div className={clsx("ml-auto mr-0.5 flex h-[22px] w-[172px] items-center pl-[5px]", sunken)}>
            <svg width="7" height="10" viewBox="0 0 7 10"><path d="M1 4 L3.500 1.500 L6 4 M1 8.500 L3.500 6 L6 8.500" stroke="#000" strokeWidth="1.400" fill="none" /></svg>
            <svg className="ml-2.5" width="17" height="14" viewBox="0 0 17 14"><path d="M1 4.500 H4 L8 1 V13 L4 9.500 H1Z" fill="#fff" stroke="#666" /><path d="M10 4.500 Q11.500 7 10 9.500 M12 3 Q14.500 7 12 11 M14 1.500 Q17.500 7 14 12.500" stroke="#777" fill="none" /></svg>
            <svg className="ml-[7px]" width="16" height="16" viewBox="0 0 16 16"><rect x="4.500" y="2.500" width="11" height="9" fill="#eee" stroke="#555" /><path d="M1 0.500 V5 H5 V0.500 M3 5 V14 H8" stroke="#444" strokeWidth="1.200" fill="#fff" /><path d="M10.500 6.500 L15.500 15.500 H5.500Z" fill="#f7d22c" stroke="#a88a10" strokeWidth="0.800" /><path d="M10.500 9.500 v3 M10.500 13.500 v1" stroke="#000" /></svg>
            <svg className="ml-2" width="16" height="16" viewBox="0 0 16 16"><path d="M1.500 1 V15 M2 2.500 Q5 1 8.500 3 V9 Q5 7.500 2 9 M8.500 4.500 Q11 6 15 4.500 Q13.500 7 14 9.500 Q11 10.500 8.500 9" fill="#fff" stroke="#555" strokeWidth="1.200" /></svg>
            <span className="ml-auto">2:07 AM</span>
            <div className="ml-2.5 mr-px"><NavIcon name="desktop" /></div>
        </div>
    </div>
);

const Watermark = () => (
    <svg className="absolute left-[1036px] top-[606px] overflow-visible opacity-70 drop-shadow-[0_0_1.5px_#667]" width="220" height="70" viewBox="0 0 220 70">
        <g className="font-[Roboto,sans-serif] text-[50px] font-light tracking-normal" fill="#fff">
            <text x="3" y="53" textLength="59" lengthAdjust="spacingAndGlyphs">ANY</text>
            <text x="132" y="53" textLength="65" lengthAdjust="spacingAndGlyphs">RUN</text>
        </g>
        <path d="M87 7 L127 34 L87 60 L85 57 V50 L117 34 L91 17 V50 M87 7 V48 M80 12 Q76 12 76 16 V53 L81 54 V17 L87 14" fill="none" stroke="#fff" strokeWidth="2.500" strokeLinejoin="round" />
    </svg>
);

export default function App() {
    return (
        <div className="relative h-[720px] w-[1280px] overflow-hidden font-['DejaVu_Sans_Condensed','DejaVu_Sans',sans-serif] text-[11px] leading-[13px] tracking-[-0.13px] text-black [font-stretch:condensed]">
            <Wallpaper />
            <DesktopIcons />
            <ArchiveWindow />
            <ExplorerWindow />
            <Taskbar />
            <Watermark />
        </div>
    );
}
